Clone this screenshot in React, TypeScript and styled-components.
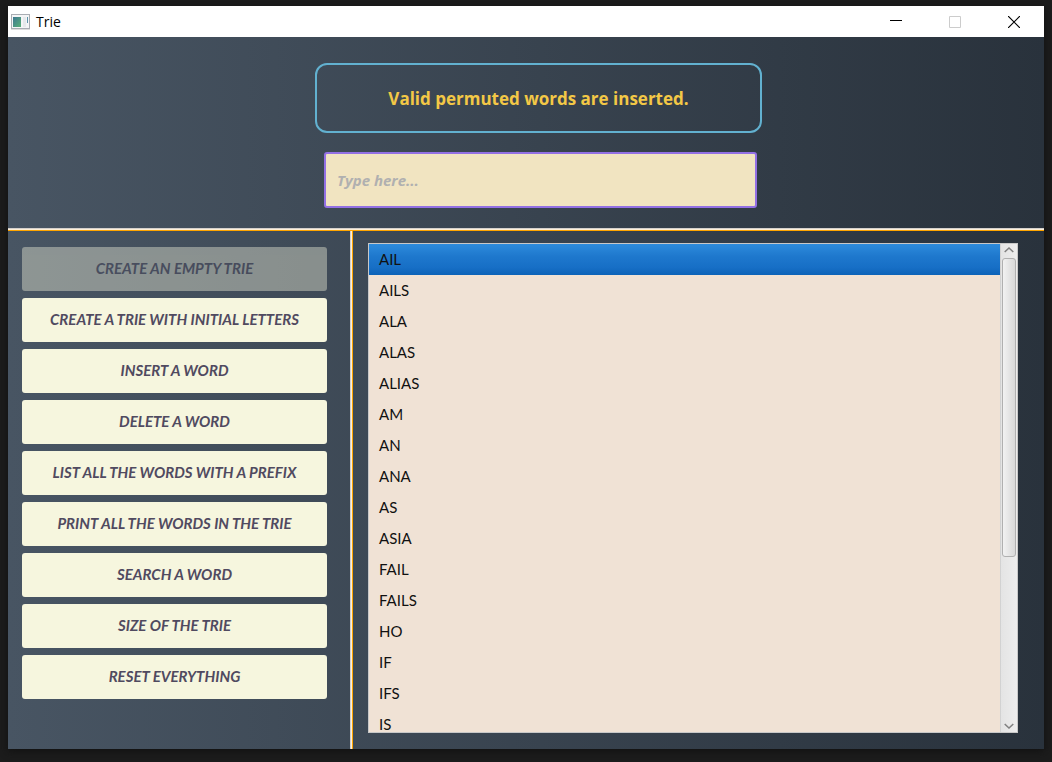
import React, { useState } from 'react';
import styled, { createGlobalStyle } from 'styled-components';

const GlobalStyle = createGlobalStyle`
  *, *::before, *::after { box-sizing: border-box; }
  body { margin: 0; background: #1c1c1c; font-family: 'Open Sans', 'Noto Sans', sans-serif; }
`;

const Desktop = styled.div`
  display: flex;
  height: 100vh;
  padding: 6px 8px 13px;
`;

const Window = styled.main`
  display: flex;
  flex: 1;
  flex-direction: column;
  min-width: 0;
  background: linear-gradient(to right, #485563, #29323c);
  box-shadow: 0 2px 8px #111111;
`;

const TitleBar = styled.header`
  display: flex;
  flex: none;
  align-items: center;
  height: 31px;
  padding: 0 1px 0 3px;
  background: #ffffff;
`;

const Title = styled.h1`
  flex: 1;
  margin: 0 0 0 6px;
  color: #000000;
  font-size: 14px;
  font-weight: 400;
  line-height: 20px;
`;

const WindowButton = styled.button`
  display: flex;
  align-items: center;
  justify-content: center;
  width: 59px;
  height: 31px;
  padding: 0;
  border: 0;
  background: none;
  color: #000000;

  &:disabled { color: #cccccc; }
`;

const Banner = styled.section`
  display: flex;
  flex: none;
  flex-direction: column;
  align-items: center;
  gap: 19px;
  padding: 26px 0 20px 25px;
`;

const Message = styled.p`
  display: flex;
  align-items: center;
  justify-content: center;
  width: 447px;
  height: 70px;
  margin: 0;
  border: 2px solid #62b1d0;
  border-radius: 12px;
  color: #f3c846;
  font-size: 17px;
  font-weight: 700;
`;

const Form = styled.form`
  display: flex;
  width: 447px;
  padding: 0 5px 0 9px;
`;

const WordInput = styled.input`
  flex: 1;
  height: 56px;
  padding: 0 11px;
  border: 2px solid #9370e4;
  border-radius: 3px;
  outline: 0;
  background: #f1e4c1;
  color: #504a60;
  font: italic 700 15px 'Open Sans', 'Noto Sans', sans-serif;

  &::placeholder { color: #b0b0b0; opacity: 1; }
`;

const Rule = styled.div<{ $vertical?: boolean }>`
  flex: none;
  ${p => (p.$vertical ? 'width: 3px;' : 'height: 3px;')}
  background: linear-gradient(${p => (p.$vertical ? 'to right' : 'to bottom')},
    #d4d0cc 0 1px, #fff0d8 1px 2px, #ffa500 2px 3px);
`;

const Workspace = styled.div`
  display: flex;
  flex: 1;
  min-height: 0;
`;

const Actions = styled.nav`
  display: flex;
  flex: none;
  flex-direction: column;
  gap: 7px;
  width: 342px;
  padding: 16px 23px 0 14px;
`;

const ActionButton = styled.button`
  height: 44px;
  padding: 0 0 2px;
  border: 0;
  border-radius: 3px;
  background: #f6f6de;
  color: #504a60;
  font: italic 700 15px Lato, 'Open Sans', sans-serif;

  &:disabled { opacity: 0.4; }
`;

const ListPane = styled.section`
  display: flex;
  flex: 1;
  min-width: 0;
  padding: 12px 26px 16px 15px;
`;

const ListFrame = styled.div`
  display: flex;
  flex: 1;
  min-width: 0;
  border: 1px solid #c8c8c8;
  background: #f0e2d5;
`;

const WordList = styled.ul`
  flex: 1;
  margin: 0;
  padding: 0;
  overflow: hidden;
  list-style: none;
`;

const Word = styled.li<{ $selected: boolean }>`
  height: 31px;
  padding-left: 10px;
  background: ${p => (p.$selected ? 'linear-gradient(#2d8bdc, #1e78cd 40%, #176fc6 75%, #0c63b8)' : 'none')};
  color: #111111;
  font: 400 15px/31px Lato, 'Open Sans', sans-serif;
`;

const ScrollBar = styled.div`
  display: flex;
  flex: none;
  flex-direction: column;
  width: 17px;
  border-left: 1px solid #d2d2d2;
  background: linear-gradient(to right, #e4e4e4, #ededed);
`;

const ScrollArrow = styled.button<{ $down?: boolean }>`
  display: flex;
  flex: none;
  align-items: ${p => (p.$down ? 'flex-end' : 'flex-start')};
  justify-content: center;
  height: 14px;
  padding: 3px 0;
  border: 0;
  background: none;
  color: #808080;
`;

const ScrollTrack = styled.div`
  flex: 1;
  padding: 0 1px;
`;

const ScrollThumb = styled.div`
  height: 65%;
  border: 1px solid #b0b0b0;
  border-radius: 3px;
  background: linear-gradient(to right, #f2f2f2, #d8d8d8);
`;

const actions = [
  'CREATE AN EMPTY TRIE',
  'CREATE A TRIE WITH INITIAL LETTERS',
  'INSERT A WORD',
  'DELETE A WORD',
  'LIST ALL THE WORDS WITH A PREFIX',
  'PRINT ALL THE WORDS IN THE TRIE',
  'SEARCH A WORD',
  'SIZE OF THE TRIE',
  'RESET EVERYTHING',
];

const words = ['AIL', 'AILS', 'ALA', 'ALAS', 'ALIAS', 'AM', 'AN', 'ANA', 'AS', 'ASIA', 'FAIL', 'FAILS', 'HO', 'IF', 'IFS', 'IS'];

function AppIcon() {
  return (
    <svg width="19" height="16" viewBox="0 0 19 16" aria-hidden="true">
      <defs>
        <linearGradient id="screen" x1="0" y1="0" x2="1" y2="1">
          <stop offset="0" stopColor="#3d7791" />
          <stop offset="1" stopColor="#58b077" />
        </linearGradient>
      </defs>
      <rect x="0.5" y="0.5" width="18" height="14" fill="#f4f5f6" stroke="#a9adb3" />
      <path d="M0 15.5h19" stroke="#dddddd" />
      <rect x="2" y="3" width="8" height="10" fill="url(#screen)" />
      <rect x="12" y="3" width="3" height="10" fill="#e6e9eb" />
      <rect x="16" y="3" width="1" height="6" fill="#5f94ac" />
    </svg>
  );
}

export default function App() {
  const [selected, setSelected] = useState('AIL');
  const [text, setText] = useState('');

  return (
    <Desktop>
      <GlobalStyle />
      <Window>
        <TitleBar>
          <AppIcon />
          <Title>Trie</Title>
          <WindowButton aria-label="Minimize">
            <svg width="12" height="12" viewBox="0 0 12 12"><path d="M0 4.5h12" stroke="currentColor" /></svg>
          </WindowButton>
          <WindowButton aria-label="Maximize" disabled>
            <svg width="12" height="12" viewBox="0 0 12 12"><path d="M.5.5h11v11H.5z" fill="none" stroke="currentColor" /></svg>
          </WindowButton>
          <WindowButton aria-label="Close">
            <svg width="12" height="12" viewBox="0 0 12 12"><path d="M0 0l12 12M12 0L0 12" stroke="currentColor" strokeWidth="1.2" /></svg>
          </WindowButton>
        </TitleBar>
        <Banner>
          <Message role="status">Valid permuted words are inserted.</Message>
          <Form onSubmit={e => e.preventDefault()}>
            <WordInput aria-label="Word" placeholder="Type here..." value={text} onChange={e => setText(e.target.value)} />
          </Form>
        </Banner>
        <Rule />
        <Workspace>
          <Actions aria-label="Trie actions">
            {actions.map((label, i) => (
              <ActionButton key={label} disabled={i === 0}>{label}</ActionButton>
            ))}
          </Actions>
          <Rule $vertical />
          <ListPane>
            <ListFrame>
              <WordList role="listbox" aria-label="Words">
                {words.map(word => (
                  <Word
                    key={word}
                    role="option"
                    aria-selected={word === selected}
                    $selected={word === selected}
                    onClick={() => setSelected(word)}
                  >
                    {word}
                  </Word>
                ))}
              </WordList>
              <ScrollBar>
                <ScrollArrow aria-label="Scroll up">
                  <svg width="10" height="6" viewBox="0 0 10 6"><path d="M.7 5L5 1l4.3 4" fill="none" stroke="currentColor" strokeWidth="1.5" /></svg>
                </ScrollArrow>
                <ScrollTrack><ScrollThumb /></ScrollTrack>
                <ScrollArrow $down aria-label="Scroll down">
                  <svg width="10" height="6" viewBox="0 0 10 6"><path d="M.7 1L5 5l4.3-4" fill="none" stroke="currentColor" strokeWidth="1.5" /></svg>
                </ScrollArrow>
              </ScrollBar>
            </ListFrame>
          </ListPane>
        </Workspace>
      </Window>
    </Desktop>
  );
}
